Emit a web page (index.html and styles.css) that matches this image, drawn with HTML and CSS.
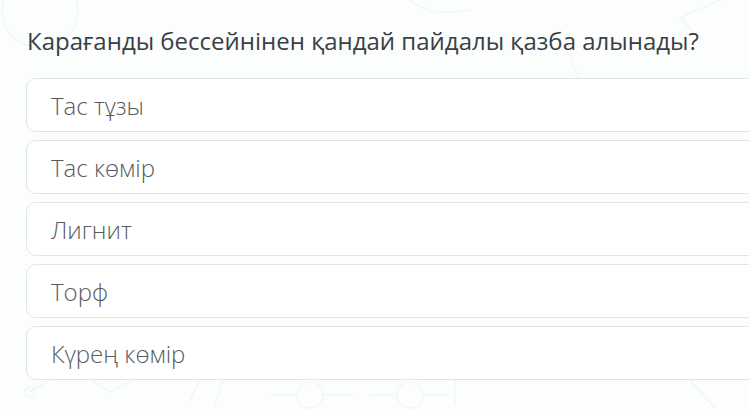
FILE: index.html
```html
<!DOCTYPE html>
<html lang="kk">
<head>
<meta charset="utf-8">
<link rel="stylesheet" href="styles.css">
</head>
<body>
<div class="bg" aria-hidden="true">
  <svg width="749" height="409" viewBox="0 0 749 409" fill="none" stroke="#f2f6f8" stroke-width="1.5">
    <circle cx="40" cy="10" r="38"/>
    <path d="M410 0 q20 18 60 10"/>
    <path d="M720 0 l-40 18 l20 20"/>
    <path d="M570 60 l20 40 l30 -10"/>
    <circle cx="30" cy="392" r="5"/>
    <path d="M30 392 l40 -25 l40 25 l40 -20"/>
    <path d="M190 400 l10 -20 M215 405 l8 -25"/>
    <circle cx="310" cy="395" r="13"/>
    <path d="M270 395 h27 M323 395 h30 M370 395 h25"/>
    <circle cx="410" cy="395" r="13"/>
    <path d="M423 395 h25 M455 380 v25"/>
    <path d="M690 380 l25 28"/>
  </svg>
</div>
<main class="quiz">
  <h1 class="question">Карағанды бессейнінен қандай пайдалы қазба алынады?</h1>
  <ul class="options">
    <li class="option">Тас тұзы</li>
    <li class="option">Тас көмір</li>
    <li class="option">Лигнит</li>
    <li class="option">Торф</li>
    <li class="option">Күрең көмір</li>
  </ul>
</main>
</body>
</html>
```
FILE: styles.css
```css
html, body {
  margin: 0;
  padding: 0;
  width: 749px;
  height: 409px;
  overflow: hidden;
  background: #fcfdfd;
}
body {
  position: relative;
  font-family: "Open Sans", "Noto Sans", sans-serif;
}
.bg {
  position: absolute;
  inset: 0;
  z-index: 0;
}
.quiz {
  position: relative;
  z-index: 1;
  padding: 25px 0 0 26px;
  width: 723px;
  overflow: hidden;
}
.question {
  margin: 0 0 0 1px;
  font-size: 24px;
  line-height: 32px;
  font-weight: 400;
  color: #3a3f46;
}
.options {
  list-style: none;
  margin: 21px 0 0 0;
  padding: 0;
  display: flex;
  flex-direction: column;
  gap: 8px;
}
.option {
  width: 760px;
  height: 52px;
  box-sizing: content-box;
  border: 1px solid #dfe5ec;
  border-radius: 10px;
  background: #ffffff;
  padding-left: 24px;
  display: flex;
  align-items: center;
  font-size: 24px;
  font-weight: 300;
  color: #575b60;
}
```
